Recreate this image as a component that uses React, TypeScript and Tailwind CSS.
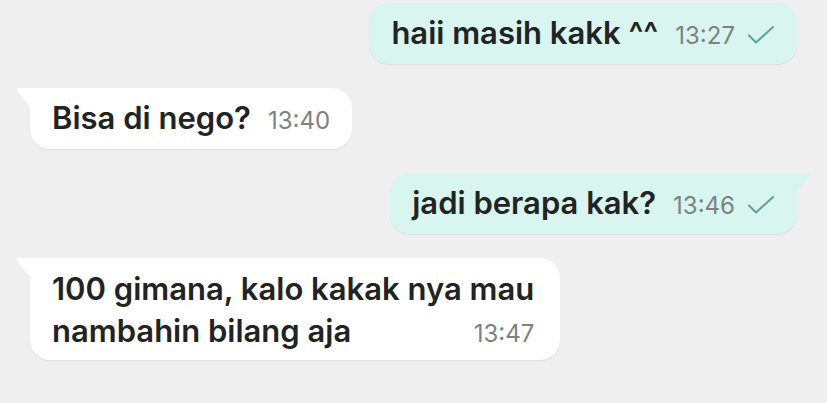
import React from 'react';

type Msg = {
  id: number;
  out: boolean;
  tail: boolean;
  lines: string[];
  time: string;
};

const messages: Msg[] = [
  { id: 1, out: true, tail: false, lines: ['haii masih kakk ^^'], time: '13:27' },
  { id: 2, out: false, tail: true, lines: ['Bisa di nego?'], time: '13:40' },
  { id: 3, out: true, tail: true, lines: ['jadi berapa kak?'], time: '13:46' },
  { id: 4, out: false, tail: true, lines: ['100 gimana, kalo kakak nya mau', 'nambahin bilang aja'], time: '13:47' },
];

const Check = () => (
  <svg width="28" height="20" viewBox="0 0 28 20" fill="none" className="ml-[12px] shrink-0 mt-[3px]">
    <path d="M2 10.5 L9 17.5 L26 2" stroke="#56a593" strokeWidth="2" strokeLinecap="round" strokeLinejoin="round" />
  </svg>
);

const Tail = ({ out, fill }: { out: boolean; fill: string }) => (
  <svg
    width="16"
    height="20"
    viewBox="0 0 16 20"
    className={out ? 'absolute top-0 -right-[14px]' : 'absolute top-0 -left-[14px]'}
    style={out ? { transform: 'scaleX(-1)' } : undefined}
  >
    <path d="M16 0 H3 C0.5 0 0 1.5 1.5 3.5 C5 8 9 13 14 19 L16 20 Z" fill={fill} />
  </svg>
);

const Bubble = ({ m }: { m: Msg }) => {
  const fill = m.out ? '#d9f5f0' : '#ffffff';
  const multi = m.lines.length > 1;
  return (
    <div className={m.out ? 'flex justify-end pr-[30px]' : 'flex justify-start pl-[30px]'}>
      <div
        className={`relative rounded-[20px] shadow-[0_1px_1px_rgba(0,0,0,0.07)] ${
          m.out ? 'bg-[#d9f5f0]' : 'bg-white'
        } ${m.tail ? (m.out ? 'rounded-tr-none' : 'rounded-tl-none') : ''}`}
      >
        {m.tail && <Tail out={m.out} fill={fill} />}
        {multi ? (
          <div className="pl-[22px] pr-[26px] pt-[10px] pb-[8px]">
            <div className="text-[31px] leading-[42px] font-semibold text-[#222323]">{m.lines[0]}</div>
            <div className="flex items-baseline justify-between">
              <span className="text-[31px] leading-[42px] font-semibold text-[#222323]">{m.lines[1]}</span>
              <span className="text-[24px] text-[#7d8281] ml-6">{m.time}</span>
            </div>
          </div>
        ) : (
          <div className="flex items-center h-[61px] pl-[22px] pr-[22px]">
            <span className="text-[31px] font-semibold text-[#222323]">{m.lines[0]}</span>
            <span className="text-[24px] text-[#7d8281] ml-[17px] mt-[5px]">{m.time}</span>
            {m.out && <Check />}
          </div>
        )}
      </div>
    </div>
  );
};

export default function App() {
  return (
    <div
      className="w-[827px] h-[403px] bg-[#efefef] flex flex-col gap-[24px] pt-[3px] overflow-hidden"
      style={{ fontFamily: 'Inter, "Noto Sans", sans-serif' }}
    >
      {messages.map((m) => (
        <Bubble key={m.id} m={m} />
      ))}
    </div>
  );
}
